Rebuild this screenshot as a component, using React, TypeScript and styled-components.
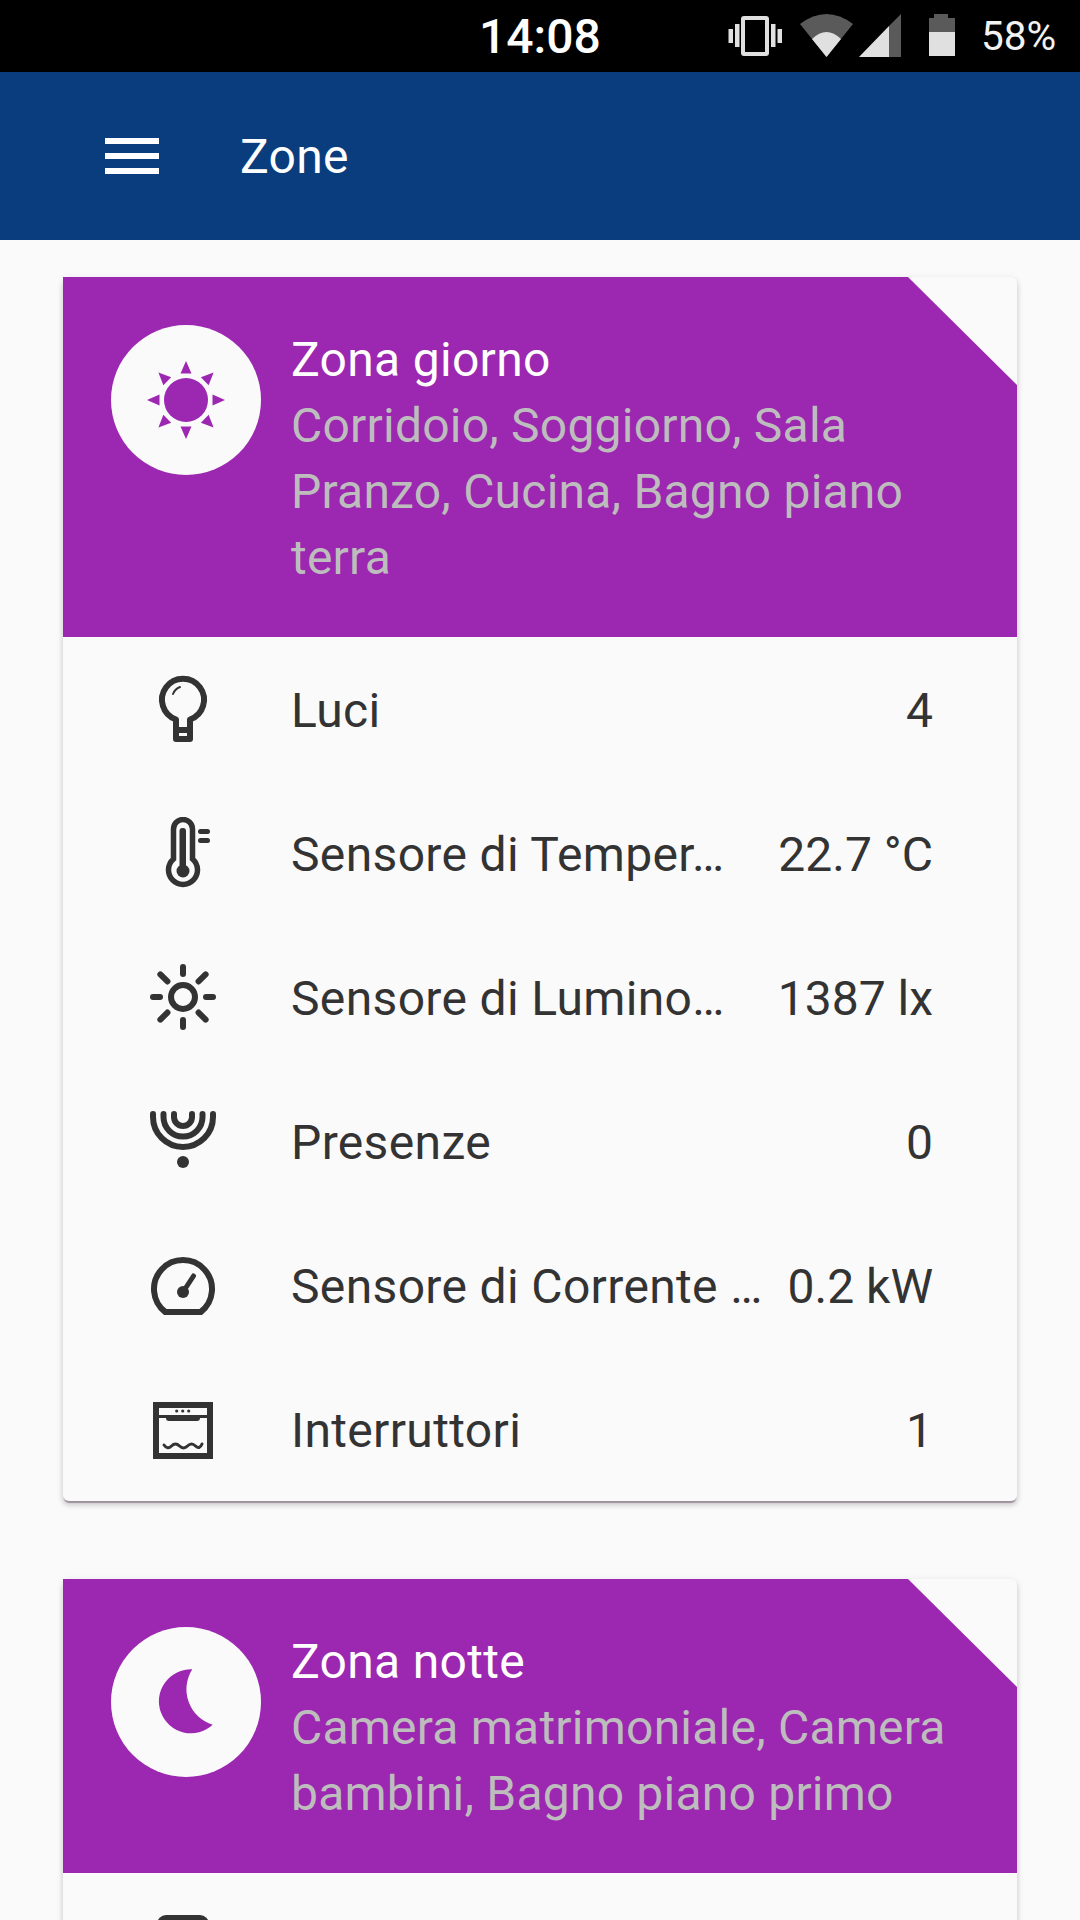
import React from "react";
import styled, { createGlobalStyle } from "styled-components";

const GlobalStyle = createGlobalStyle`
  html, body {
    margin: 0;
    padding: 0;
    background: #fafafa;
  }
  body {
    font-family: Roboto, "Liberation Sans", sans-serif;
  }
`;

const Page = styled.div`
  width: 1080px;
  height: 1920px;
  overflow: hidden;
  background: #fafafa;
`;

const StatusBar = styled.div`
  height: 72px;
  background: #000;
  display: flex;
  align-items: center;
  padding: 0 0 0 479px;
  box-sizing: border-box;
  color: #fff;
`;

const Clock = styled.span`
  font-size: 48px;
  font-weight: 500;
  width: 249px;
`;

const Battery = styled.span`
  font-size: 40.5px;
  margin-left: 26px;
  color: #f2f2f2;
`;

const AppBar = styled.header`
  height: 168px;
  background: #0a3d7e;
  display: flex;
  align-items: center;
  padding-left: 105px;
  gap: 81px;
  color: #fff;
`;

const AppTitle = styled.h1`
  margin: 0;
  padding-top: 2px;
  font-size: 48px;
  font-weight: 400;
  letter-spacing: 0.3px;
  line-height: 1;
`;

const Content = styled.main`
  padding: 37px 63px 0;
  display: flex;
  flex-direction: column;
  gap: 78px;
`;

const Card = styled.section`
  background: #fafafa;
  border-radius: 6px;
  box-shadow: 0 3px 1px -1px rgba(80, 50, 80, 0.42), 0 4px 5px 1px rgba(0, 0, 0, 0.14), 0 0 8px 0 rgba(0, 0, 0, 0.05);
`;

const CardHeader = styled.div`
  background: #9c27b0;
  clip-path: polygon(0 0, 845px 0, 100% 108px, 100% 100%, 0 100%);
  display: flex;
  align-items: flex-start;
  padding: 50px 48px 46px;
  gap: 30px;
`;

const Avatar = styled.div`
  flex: none;
  width: 150px;
  height: 150px;
  margin: -2px 0 0;
  border-radius: 50%;
  background: #fafafa;
  display: flex;
  align-items: center;
  justify-content: center;
`;

const HeaderText = styled.div`
  font-size: 48px;
  line-height: 66px;
  min-width: 0;
`;

const ZoneName = styled.div`
  color: #fff;
  letter-spacing: 0.3px;
`;

const ZoneRooms = styled.div`
  color: #bdbdbd;
  letter-spacing: 0.22px;
`;

const Row = styled.div`
  height: 144px;
  display: flex;
  align-items: center;
  padding: 0 84px;
  font-size: 48px;
  color: #333;
`;

const RowIcon = styled.svg`
  flex: none;
  width: 72px;
  height: 72px;
  margin-right: 72px;
  color: #333;
`;

const RowName = styled.span`
  flex: 1;
  min-width: 0;
  padding-top: 2px;
  letter-spacing: 0.35px;
  white-space: nowrap;
`;

const RowValue = styled.span`
  flex: none;
  margin-left: 20px;
  padding-top: 2px;
`;

const StatusIcons = () => (
  <svg width="227" height="72" viewBox="728 0 227 72">
    <g fill="#e0e0e0">
      <path fillRule="evenodd" d="M744 16h22a3 3 0 0 1 3 3v34a3 3 0 0 1-3 3h-22a3 3 0 0 1-3-3V19a3 3 0 0 1 3-3zm1 4v32h20V20z" />
      <rect x="728.5" y="29" width="4.5" height="14" />
      <rect x="735" y="24" width="4.5" height="23" />
      <rect x="771" y="24" width="4.5" height="23" />
      <rect x="777.5" y="29" width="4.5" height="14" />
    </g>
    <path fill="#5a5a5a" d="M800 24 Q826.5 4 853 24 L826.5 57Z" />
    <path fill="#e0e0e0" d="M812 39 Q826.5 25 841 39 L826.5 57Z" />
    <path fill="#5a5a5a" d="M901 14V57H889V26Z" />
    <path fill="#e0e0e0" d="M889 26V57H859Z" />
    <path fill="#5a5a5a" d="M934 14h14v4h7v14h-26V18h5z" />
    <rect x="929" y="32" width="26" height="24" fill="#e0e0e0" />
  </svg>
);

const MenuIcon = () => (
  <svg width="54" height="36" viewBox="0 0 54 36" fill="#fff">
    <rect width="54" height="6" />
    <rect y="15" width="54" height="6" />
    <rect y="30" width="54" height="6" />
  </svg>
);

const rays = [0, 45, 90, 135, 180, 225, 270, 315];

const SunBadge = () => (
  <svg width="100" height="100" viewBox="-50 -50 100 100" fill="#9c27b0">
    <circle r="22" />
    {rays.map((a) => (
      <path key={a} d="M0 -39 L5.5 -26.5 H-5.5Z" transform={`rotate(${a})`} />
    ))}
  </svg>
);

const MoonBadge = () => (
  <svg width="100" height="100" viewBox="-50 -50 100 100" fill="#9c27b0">
    <path d="M6.3 -32.7A32 32 0 1 0 26.7 22.7A37 37 0 0 1 6.3 -32.7Z" />
  </svg>
);

const BulbIcon = () => (
  <RowIcon viewBox="0 0 72 72">
    <path d="M29 46.5A21 21 0 1 1 43 46.5V66H29Z" fill="none" stroke="currentColor" strokeWidth="6" strokeLinejoin="round" />
    <rect x="29" y="54" width="14" height="6" fill="currentColor" />
    <path d="M26 21A12 12 0 0 1 33 14" fill="none" stroke="currentColor" strokeWidth="2" strokeLinecap="round" />
  </RowIcon>
);

const ThermoIcon = () => (
  <RowIcon viewBox="0 0 72 72">
    <path d="M26.5 12A9.5 9.5 0 0 1 45.5 12V42A14.5 14.5 0 1 1 26.5 42Z" fill="none" stroke="currentColor" strokeWidth="5.5" />
    <rect x="32.5" y="11" width="6.5" height="40" rx="3" fill="currentColor" />
    <circle cx="36" cy="54" r="6.5" fill="currentColor" />
    <rect x="51" y="12" width="12" height="5" rx="2.5" fill="currentColor" />
    <rect x="51" y="21" width="12" height="5" rx="2.5" fill="currentColor" />
  </RowIcon>
);

const LightIcon = () => (
  <RowIcon viewBox="0 0 72 72">
    <circle cx="36" cy="36" r="12" fill="none" stroke="currentColor" strokeWidth="6" />
    <g stroke="currentColor" strokeWidth="6" strokeLinecap="round">
      {rays.map((a) => (
        <line key={a} x1="36" y1={a % 90 === 0 ? 6 : 4} x2="36" y2={a % 90 === 0 ? 13 : 14} transform={`rotate(${a} 36 36)`} />
      ))}
    </g>
  </RowIcon>
);

const PresenceIcon = () => (
  <RowIcon viewBox="0 0 72 72">
    <g fill="none" stroke="currentColor" strokeWidth="6" strokeLinecap="round">
      <path d="M6 9V12A30 30 0 0 0 66 12V9" />
      <path d="M16.5 9V12A19.5 19.5 0 0 0 55.5 12V9" />
      <path d="M27 9V12A9 9 0 0 0 45 12V9" />
    </g>
    <circle cx="36" cy="57" r="6" fill="currentColor" />
  </RowIcon>
);

const GaugeIcon = () => (
  <RowIcon viewBox="0 0 72 72">
    <clipPath id="gauge-cut">
      <rect width="72" height="66" />
    </clipPath>
    <path d="M18.3 63A29 29 0 1 1 53.7 63Z" fill="none" stroke="currentColor" strokeWidth="6" clipPath="url(#gauge-cut)" />
    <circle cx="36" cy="43" r="6" fill="currentColor" />
    <line x1="36" y1="43" x2="46.5" y2="27" stroke="currentColor" strokeWidth="5" strokeLinecap="round" />
  </RowIcon>
);

const OvenIcon = () => (
  <RowIcon viewBox="0 0 72 72">
    <rect x="9" y="12" width="54" height="51" fill="none" stroke="currentColor" strokeWidth="6" />
    <rect x="9" y="22" width="54" height="3" fill="currentColor" />
    <path d="M19 24H53V25A3 3 0 0 1 50 28H22A3 3 0 0 1 19 25Z" fill="currentColor" />
    <g fill="currentColor">
      <circle cx="29.7" cy="18" r="1.6" />
      <circle cx="35.7" cy="18" r="1.6" />
      <circle cx="41.7" cy="18" r="1.6" />
    </g>
    <path d="M17 52Q20.5 57 24.5 53T32.5 53T40.5 53T48.5 53T55 51" fill="none" stroke="currentColor" strokeWidth="3" strokeLinecap="round" />
  </RowIcon>
);

const ShutterIcon = () => (
  <RowIcon viewBox="0 0 72 72">
    <rect x="10" y="6" width="52" height="60" rx="9" fill="currentColor" />
  </RowIcon>
);

const dayRows = [
  { icon: <BulbIcon />, name: "Luci", value: "4" },
  { icon: <ThermoIcon />, name: "Sensore di Temper…", value: "22.7 °C" },
  { icon: <LightIcon />, name: "Sensore di Lumino…", value: "1387 lx" },
  { icon: <PresenceIcon />, name: "Presenze", value: "0" },
  { icon: <GaugeIcon />, name: "Sensore di Corrente …", value: "0.2 kW" },
  { icon: <OvenIcon />, name: "Interruttori", value: "1" },
];

export default function App() {
  return (
    <Page>
      <GlobalStyle />
      <StatusBar>
        <Clock>14:08</Clock>
        <StatusIcons />
        <Battery>58%</Battery>
      </StatusBar>
      <AppBar>
        <MenuIcon />
        <AppTitle>Zone</AppTitle>
      </AppBar>
      <Content>
        <Card>
          <CardHeader>
            <Avatar>
              <SunBadge />
            </Avatar>
            <HeaderText>
              <ZoneName>Zona giorno</ZoneName>
              <ZoneRooms>Corridoio, Soggiorno, Sala Pranzo, Cucina, Bagno piano terra</ZoneRooms>
            </HeaderText>
          </CardHeader>
          {dayRows.map((r) => (
            <Row key={r.name}>
              {r.icon}
              <RowName>{r.name}</RowName>
              <RowValue>{r.value}</RowValue>
            </Row>
          ))}
        </Card>
        <Card>
          <CardHeader>
            <Avatar>
              <MoonBadge />
            </Avatar>
            <HeaderText>
              <ZoneName>Zona notte</ZoneName>
              <ZoneRooms>Camera matrimoniale, Camera bambini, Bagno piano primo</ZoneRooms>
            </HeaderText>
          </CardHeader>
          <Row>
            <ShutterIcon />
          </Row>
        </Card>
      </Content>
    </Page>
  );
}
